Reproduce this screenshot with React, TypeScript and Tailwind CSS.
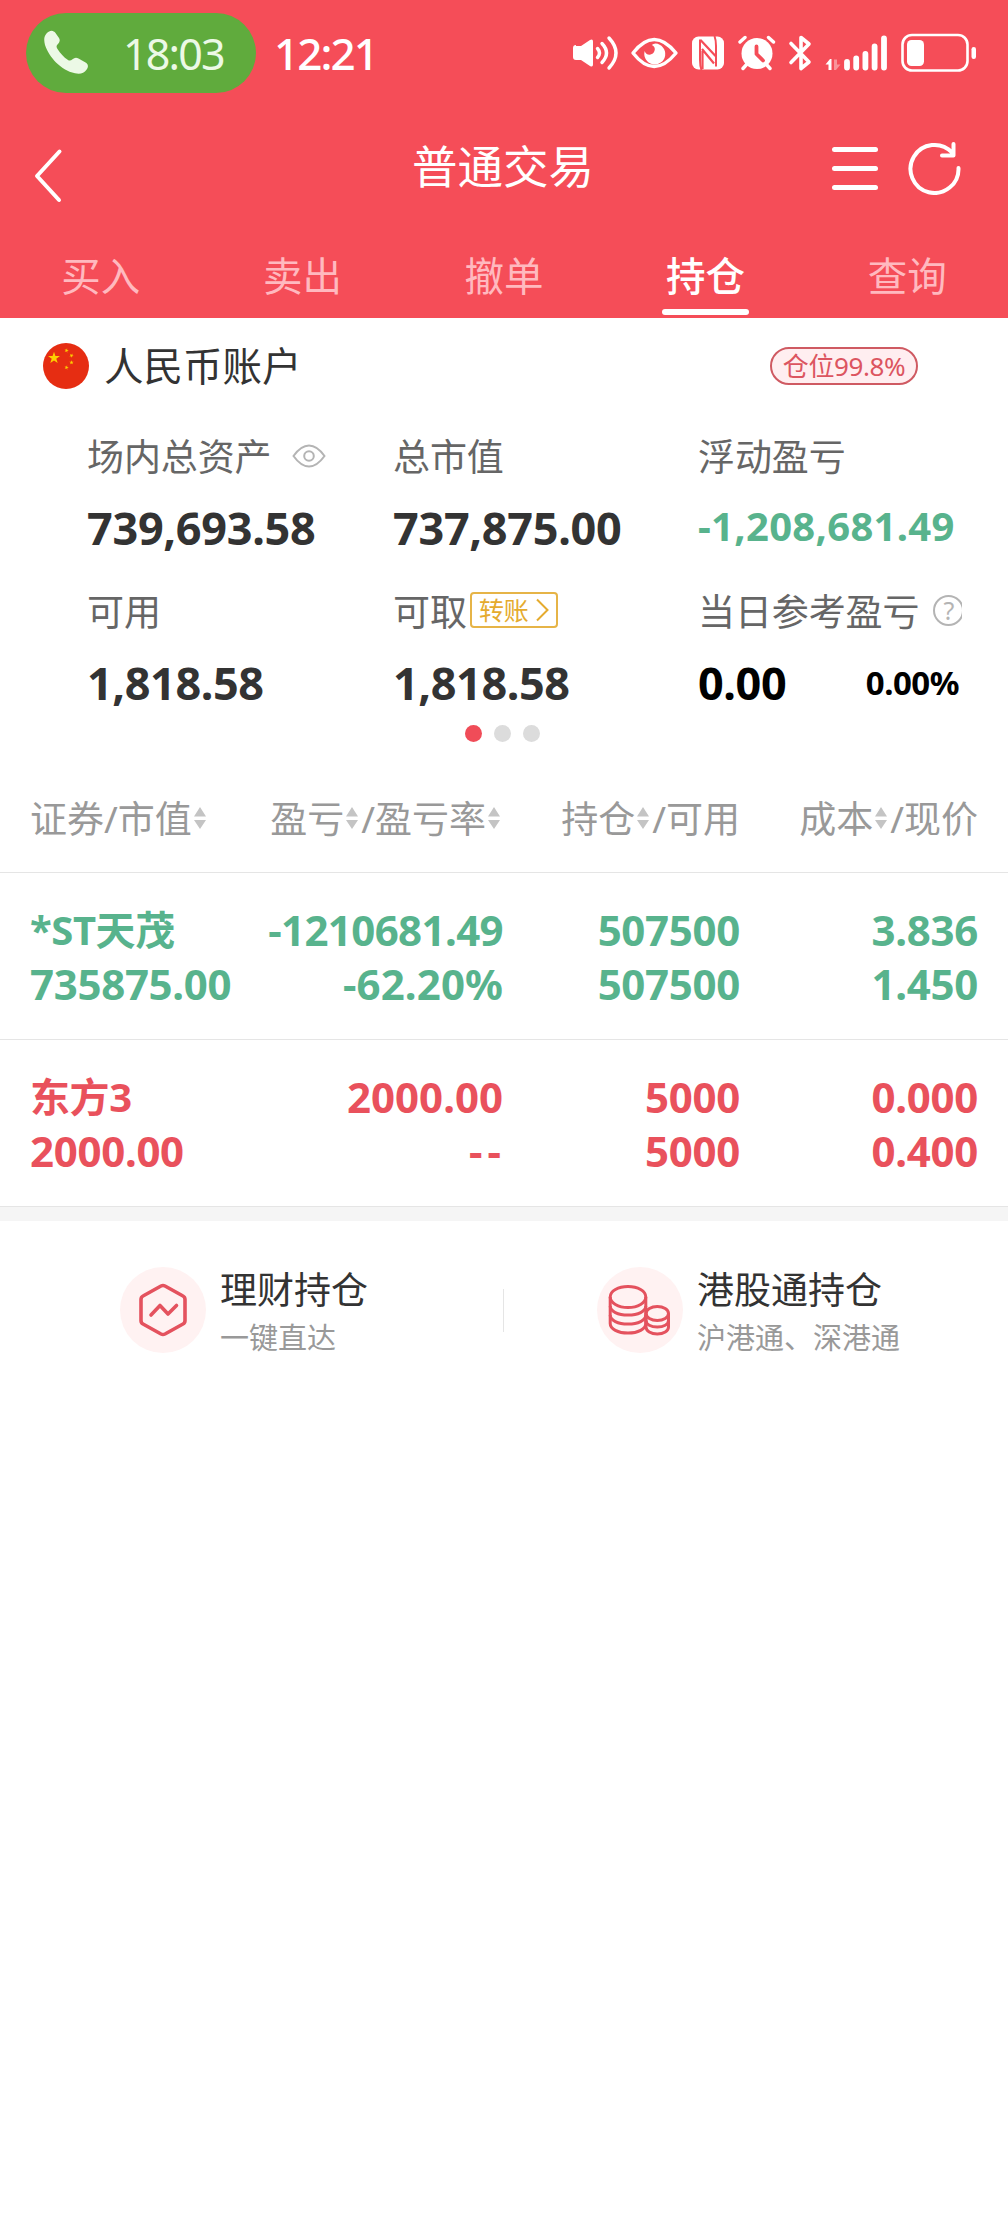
import React from "react";

const tabs = ["买入", "卖出", "撤单", "持仓", "查询"];

const holdings = [
  {
    color: "text-[#58b38d]",
    name: "*ST天茂",
    marketValue: "735875.00",
    profit: "-1210681.49",
    profitRate: "-62.20%",
    position: "507500",
    available: "507500",
    cost: "3.836",
    price: "1.450",
  },
  {
    color: "text-[#e9515c]",
    name: "东方3",
    marketValue: "2000.00",
    profit: "2000.00",
    profitRate: "--",
    position: "5000",
    available: "5000",
    cost: "0.000",
    price: "0.400",
  },
];

function StatusIcons() {
  return (
    <svg width="410" height="44" viewBox="570 32 410 44" fill="none" className="mt-[2px] shrink-0">
      {/* Volume */}
      <path
        d="M577 46h5l9-6q3-1.500 3 1.500v23q0 3-3 1.500l-9-6h-5q-3 0-3-3v-9q0-3 3-3z"
        fill="white"
      />
      <path
        d="M598.500 48.500q4 4.500 0 9M603 43.500q9 9.500 0 19M610 38q14 15 0 30"
        stroke="white"
        strokeWidth="3.400"
        strokeLinecap="round"
      />
      {/* Eye */}
      <path
        d="M634 53q21-27 43 0q-22 27-43 0z"
        stroke="white"
        strokeWidth="3.400"
        strokeLinejoin="round"
      />
      <path
        d="M656.500 43.500a10.500 10.500 0 1 1-10.800 7.500c.8 4 6.500 5 9 1.500 2.200-3.200 1-6.500-2-7.500a8 8 0 0 1 3.800-1.500z"
        fill="white"
      />
      {/* NFC */}
      <rect x="693" y="36.500" width="32" height="33" rx="6.500" fill="white" />
      <path
        d="M702.500 70q-1.500-4-1.500-10V39.500M715.500 36q1.500 4 1.500 10v20.500"
        stroke="#f54d58"
        strokeWidth="2"
      />
      <path
        d="M701.500 40l15 16M703 49l12 14.500M703.500 51v18"
        stroke="#f54d58"
        strokeWidth="2.200"
      />
      {/* Alarm */}
      <circle cx="758" cy="53.500" r="15.500" fill="white" />
      <path
        d="M741 42l5-4.500M774.500 42l-5-4.500M748 64l-4 4.500M767 64l4 4.500"
        stroke="white"
        strokeWidth="3.400"
        strokeLinecap="round"
      />
      <path
        d="M757.500 46.500v7.500l6.500 6.500"
        stroke="#f54d58"
        strokeWidth="3.800"
        strokeLinecap="round"
        strokeLinejoin="round"
      />
      {/* Bluetooth */}
      <path
        d="M792 43.500l18 18.500-8 6.500v-31l8 6.500-18 18.500"
        stroke="white"
        strokeWidth="3.600"
        strokeLinecap="round"
        strokeLinejoin="round"
      />
      {/* Signal */}
      <path d="M826.500 64.500l4.500-5.500h1.500v11h-3v-5.500z" fill="white" />
      <path d="M835 59.500h3v5h3.500l-4.500 5.500h-2z" fill="white" opacity="0.400" />
      <path
        d="M848 62v5.500M857.200 58.500v9M866.400 54v13.500M875.600 46.500v21M885 38.500v29"
        stroke="white"
        strokeWidth="5.800"
        strokeLinecap="round"
      />
      {/* Battery */}
      <rect x="903.500" y="35" width="65" height="35.500" rx="9.500" stroke="white" strokeWidth="2.600" />
      <rect x="908" y="40" width="17" height="26" rx="4.500" fill="white" />
      <rect x="972.500" y="47" width="4.500" height="12" rx="2.200" fill="white" />
    </svg>
  );
}

function SortArrows() {
  return (
    <svg width="12" height="22" viewBox="0 0 12 22" className="ml-[2px] mr-[3px] shrink-0">
      <path d="M6 0l6 9.500H0zM6 22l6-9H0z" fill="#c4c4c4" />
    </svg>
  );
}

function Flag() {
  const star = "M0-1L.225-.309H.951L.363.118.588.809 0 .382-.588.809-.363.118-.951-.309H-.225z";
  return (
    <svg width="46" height="46" viewBox="0 0 46 46" className="shrink-0">
      <circle cx="23" cy="23" r="23" fill="#e62d12" />
      <g fill="#fdd000">
        <path d={star} transform="translate(11 15) scale(6.300)" />
        <path d={star} transform="translate(23.500 7.500) scale(2.300) rotate(15)" />
        <path d={star} transform="translate(28.500 12.500) scale(2.300) rotate(30)" />
        <path d={star} transform="translate(28.500 19.500) scale(2.300)" />
        <path d={star} transform="translate(23.500 24.500) scale(2.300) rotate(15)" />
      </g>
    </svg>
  );
}

function Header() {
  return (
    <header className="h-[318px] bg-[#f54d58] text-white">
      <div className="flex h-[106px] items-center pl-[26px]">
        <div className="flex h-20 w-[230px] items-center rounded-full bg-[#60ab3d] pl-[17px] text-[#ecf9e6]">
          <svg width="46" height="46" viewBox="0 0 46 46" className="shrink-0">
            <path
              d="M3.500 3.500C7-.5 10.500 0 12.500 3l3.500 5c1.500 2.500.5 4.500-1.500 6.500-1.500 1.500-1 3 0 4.500 3 4.500 6 8 10.500 11 1.500 1 3 .5 4.500-.7 2-1.800 4-2 6-.7l7.500 4.200c2.500 1.700 2.500 4.500.5 7-2.500 3.500-6.500 4.700-11.500 3.500C17.500 40 6 27 2 15 .8 10.500.8 6.500 3.500 3.500z"
              fill="currentColor"
            />
          </svg>
          <span className="ml-[34px] text-[43px] leading-none tracking-[-1.8px]">18:03</span>
        </div>
        <span className="ml-[18px] text-[44px] font-medium leading-none tracking-[-1.9px]">12:21</span>
        <div className="ml-auto mr-[29px]">
          <StatusIcons />
        </div>
      </div>

      <div className="grid h-[124px] grid-cols-3 items-center">
        <svg width="32" height="58" viewBox="0 0 32 58" fill="none" className="ml-8 mt-3">
          <path
            d="M27.500 6.500L5 31l22 24"
            stroke="white"
            strokeWidth="4"
            strokeLinecap="round"
            strokeLinejoin="round"
          />
        </svg>
        <h1 className="mb-[3px] pr-0.5 text-center text-[45.500px] leading-none">普通交易</h1>
        <div className="ml-auto mr-[46px] flex items-center gap-[30px]">
          <div className="flex w-[46px] flex-col gap-[14px]">
            <span className="h-[5px] rounded-full bg-white"></span>
            <span className="h-[5px] rounded-full bg-white"></span>
            <span className="h-[5px] rounded-full bg-white"></span>
          </div>
          <svg width="54" height="54" viewBox="0 0 54 54" fill="none">
            <path
              d="M50.500 27A24 24 0 1 1 44 11.500M45.500 3v11.500H34"
              stroke="white"
              strokeWidth="4"
              strokeLinecap="round"
              strokeLinejoin="round"
            />
          </svg>
        </div>
      </div>

      <nav className="grid h-[88px] grid-cols-5">
        {tabs.map((tab) => (
          <div
            key={tab}
            className={`flex flex-col items-center pt-[22px] text-[39.500px] leading-[48px] ${
              tab === "持仓" ? "font-medium text-white" : "text-[#ffb9bf]"
            }`}
          >
            {tab}
            {tab === "持仓" && (
              <span className="mt-[9px] h-[6px] w-[87px] rounded-full bg-white"></span>
            )}
          </div>
        ))}
      </nav>
    </header>
  );
}

function Account() {
  return (
    <section className="h-[442px]">
      <div className="flex h-24 items-center pl-[43px] pr-[90px]">
        <Flag />
        <h2 className="ml-[15px] pt-0.5 text-[39.500px] leading-none text-[#333]">人民币账户</h2>
        <span className="ml-auto flex h-[38px] w-[148px] items-center justify-center rounded-full border-2 border-[#cf5a62] bg-[#ffeef0] text-[26px] leading-none tracking-[-0.4px] text-[#dc5560]">
          仓位99.8%
        </span>
      </div>

      <div className="grid h-[310px] grid-cols-[306px_305px_264px] grid-rows-2 pl-[87px] text-[#333]">
        <div>
          <div className="mt-[18px] flex h-12 items-center text-[37px] leading-none tracking-[-0.1px] text-[#666]">
            场内总资产
            <svg width="34" height="24" viewBox="0 0 34 24" fill="none" stroke="#b4b4b4" strokeWidth="2" className="ml-5">
              <path d="M1.500 12Q9 1.500 17 1.500T32.500 12Q25 22.500 17 22.500T1.500 12z" />
              <circle cx="17" cy="12" r="4.800" />
            </svg>
          </div>
          <div className="mt-6 text-[45px] font-bold leading-[48px] tracking-[-0.3px]">739,693.58</div>
        </div>
        <div>
          <div className="mt-[18px] flex h-12 items-center text-[37px] leading-none tracking-[-0.1px] text-[#666]">总市值</div>
          <div className="mt-6 text-[45px] font-bold leading-[48px] tracking-[-0.3px]">737,875.00</div>
        </div>
        <div>
          <div className="mt-[18px] flex h-12 items-center text-[37px] leading-none tracking-[-0.1px] text-[#666]">浮动盈亏</div>
          <div className="mt-[22px] text-[40px] font-bold leading-[48px] tracking-[0.3px] text-[#58b38d]">-1,208,681.49</div>
        </div>
        <div>
          <div className="mt-[18px] flex h-12 items-center text-[37px] leading-none tracking-[-0.1px] text-[#666]">可用</div>
          <div className="mt-6 text-[45px] font-bold leading-[48px] tracking-[-0.4px]">1,818.58</div>
        </div>
        <div>
          <div className="mt-[18px] flex h-12 items-center text-[37px] leading-none tracking-[-0.1px] text-[#666]">
            可取
            <span className="mb-[2px] ml-[3px] flex h-9 w-[88px] items-center justify-center gap-[7px] rounded border-2 border-[#e6b447] text-[25px] text-[#e5ab2e]">
              转账
              <svg width="13" height="24" viewBox="0 0 13 24" fill="none">
                <path d="M1 1.500L11.500 12 1 22.500" stroke="#e5ab2e" strokeWidth="2" />
              </svg>
            </span>
          </div>
          <div className="mt-6 text-[45px] font-bold leading-[48px] tracking-[-0.4px]">1,818.58</div>
        </div>
        <div>
          <div className="mt-[18px] flex h-12 items-center overflow-hidden text-[37px] leading-none tracking-[-0.1px] text-[#666]">
            <span className="shrink-0">当日参考盈亏</span>
            <span className="mb-[2px] ml-[14px] flex h-[31px] w-[31px] shrink-0 items-center justify-center rounded-full border-2 border-[#b4b4b4] text-[25px] text-[#b4b4b4]">
              ?
            </span>
          </div>
          <div className="mt-6 flex items-center justify-between pr-[3px] font-bold leading-[48px] text-black">
            <span className="text-[45px] tracking-[-0.4px]">0.00</span>
            <span className="text-[33px] tracking-[-0.5px]">0.00%</span>
          </div>
        </div>
      </div>

      <div className="mt-[1px] flex justify-center gap-3 pr-[3px]">
        <span className="h-[17px] w-[17px] rounded-full bg-[#f04c58]"></span>
        <span className="h-[17px] w-[17px] rounded-full bg-[#dcdcdc]"></span>
        <span className="h-[17px] w-[17px] rounded-full bg-[#dcdcdc]"></span>
      </div>
    </section>
  );
}

function Holdings() {
  return (
    <section>
      <div className="grid h-[113px] grid-cols-[200px_273px_237px_238px] items-center border-b border-[#e5e5e5] px-[30px] pt-1 text-[37px] leading-none text-[#999]">
        <div className="flex items-center">
          证券/市值
          <SortArrows />
        </div>
        <div className="flex items-center justify-end">
          盈亏
          <SortArrows />
          /盈亏率
          <SortArrows />
        </div>
        <div className="flex items-center justify-end">
          持仓
          <SortArrows />
          /可用
        </div>
        <div className="flex items-center justify-end">
          成本
          <SortArrows />
          /现价
        </div>
      </div>

      {holdings.map((item) => (
        <div
          key={item.name}
          className={`grid h-[167px] grid-cols-[220px_253px_237px_238px] border-b border-[#e5e5e5] px-[30px] pt-[30px] text-right text-[42px] font-bold leading-[54px] tracking-[-0.3px] ${item.color}`}
        >
          <div className="text-left">
            <div className="text-[40px] tracking-[-0.4px]">{item.name}</div>
            <div>{item.marketValue}</div>
          </div>
          <div>
            <div className={item.profit.startsWith("-") ? "tracking-[-0.6px]" : "tracking-normal"}>
              {item.profit}
            </div>
            <div className={item.profitRate === "--" ? "-mr-[3px] tracking-[5px]" : "tracking-[0.1px]"}>
              {item.profitRate}
            </div>
          </div>
          <div>
            <div>{item.position}</div>
            <div>{item.available}</div>
          </div>
          <div>
            <div>{item.cost}</div>
            <div>{item.price}</div>
          </div>
        </div>
      ))}
      <div className="h-[14px] bg-[#f5f5f5]"></div>
    </section>
  );
}

function Shortcuts() {
  return (
    <section className="flex h-[178px] items-center">
      <div className="flex w-[503px] items-center pl-[120px]">
        <span className="flex h-[86px] w-[86px] items-center justify-center rounded-full bg-[#fff2f2]">
          <svg width="50" height="54" viewBox="0 0 50 54" fill="none" stroke="#e4525e" strokeWidth="3.600" strokeLinejoin="round" strokeLinecap="round">
            <path d="M23 3Q25 2 27 3L45 13Q47 14 47 16.500V37.500Q47 40 45 41L27 51Q25 52 23 51L5 41Q3 40 3 37.500V16.500Q3 14 5 13z" />
            <path d="M13 32L22 22.500 30 31 38.500 22.500" />
          </svg>
        </span>
        <div className="ml-[14px] pt-2">
          <div className="text-[37px] leading-[48px] text-[#333]">理财持仓</div>
          <div className="text-[29px] leading-[48px] text-[#999]">一键直达</div>
        </div>
      </div>
      <div className="h-[43px] w-px bg-[#e5e5e5]"></div>
      <div className="flex items-center pl-[93px]">
        <span className="flex h-[86px] w-[86px] items-center justify-center rounded-full bg-[#fff2f2]">
          <svg width="62" height="52" viewBox="0 0 62 52" fill="none" stroke="#e4525e" strokeWidth="3" className="mr-[3px]">
            <ellipse cx="20" cy="13" rx="17.800" ry="10.500" />
            <path d="M2.200 13v26.500C2.200 45 10 49 20 49s17.800-4 17.800-9.500V13" />
            <path d="M2.200 22c0 5.500 7.800 9 17.800 9s17.800-3.500 17.800-9M2.200 31c0 5.500 7.800 9 17.800 9s17.800-3.500 17.800-9" />
            <ellipse cx="49.300" cy="29.500" rx="11.200" ry="7" />
            <path d="M38 29.500V43c0 4 5 7 11.300 7s11.200-3 11.200-7V29.500" />
            <path d="M38 36.500c0 4 5 6.500 11.300 6.500s11.200-2.500 11.200-6.500" />
          </svg>
        </span>
        <div className="ml-[14px] pt-2">
          <div className="text-[37px] leading-[48px] text-[#333]">港股通持仓</div>
          <div className="text-[29px] leading-[48px] text-[#999]">沪港通、深港通</div>
        </div>
      </div>
    </section>
  );
}

function App() {
  return (
    <main className="h-[2232px] w-[1008px] overflow-hidden bg-white font-['Noto_Sans','Noto_Sans_CJK_SC',sans-serif]">
      <Header />
      <Account />
      <Holdings />
      <Shortcuts />
    </main>
  );
}

export default App;
